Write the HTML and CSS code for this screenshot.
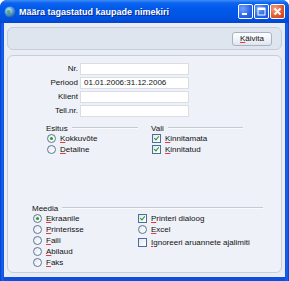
FILE: index.html
```html
<!DOCTYPE html>
<html>
<head>
	<title>Määra tagastatud kaupade nimekiri</title>
	<link rel="stylesheet" href="styles.css">
</head>
<body>
	<div class="window">
		<div class="titlebar">
			<svg class="app-icon" width="12" height="12" viewBox="0 0 12 12">
				<defs>
					<radialGradient id="globe" cx="0.4" cy="0.35" r="0.7">
						<stop offset="0" stop-color="#d8f0ff"/>
						<stop offset="0.45" stop-color="#5fa8e0"/>
						<stop offset="1" stop-color="#1d4f9a"/>
					</radialGradient>
				</defs>
				<circle cx="6" cy="6" r="5.5" fill="url(#globe)"/>
				<path d="M3 4.5 Q5 3 6.5 4.8 Q5.5 6.5 7.5 8 Q5 9 3.5 7.5 Z" fill="#4b9a63" opacity="0.8"/>
			</svg>
			<span class="title">Määra tagastatud kaupade nimekiri</span>
			<div class="caption-buttons">
				<span class="cap">
					<svg width="13" height="13" viewBox="0 0 13 13"><rect x="3" y="8" width="5" height="2" fill="#fff"/></svg>
				</span>
				<span class="cap">
					<svg width="13" height="13" viewBox="0 0 13 13"><rect x="3" y="3" width="7" height="7" fill="none" stroke="#fff" stroke-width="1"/><rect x="3" y="3" width="7" height="2" fill="#fff"/></svg>
				</span>
				<span class="cap close">
					<svg width="13" height="13" viewBox="0 0 13 13"><path d="M3.5 3.5 L9.5 9.5 M9.5 3.5 L3.5 9.5" stroke="#fff" stroke-width="1.8"/></svg>
				</span>
			</div>
		</div>

		<div class="client">
			<div class="toolbar">
				<button class="run"><u>K</u>äivita</button>
			</div>

			<div class="panel">
				<div class="fields">
					<label>Nr.</label><div class="input"></div>
					<label>Periood</label><div class="input">01.01.2006:31.12.2006</div>
					<label>Klient</label><div class="input"></div>
					<label>Tell.nr.</label><div class="input"></div>
				</div>

				<div class="groups">
					<div class="group">
						<div class="group-head"><span>Esitus</span><i></i></div>
						<div class="opt"><span class="radio on"></span><span><u>K</u>okkuvõte</span></div>
						<div class="opt"><span class="radio"></span><span><u>D</u>etailne</span></div>
					</div>
					<div class="group">
						<div class="group-head"><span>Vali</span><i></i></div>
						<div class="opt"><span class="check on"></span><span><u>K</u>innitamata</span></div>
						<div class="opt"><span class="check on"></span><span><u>K</u>innitatud</span></div>
					</div>
				</div>

				<div class="media">
					<div class="group-head"><span>Meedia</span><i></i></div>
					<div class="media-cols">
						<div class="col-left">
							<div class="opt"><span class="radio on"></span><span><u>E</u>kraanile</span></div>
							<div class="opt"><span class="radio"></span><span><u>P</u>rinterisse</span></div>
							<div class="opt"><span class="radio"></span><span><u>F</u>aili</span></div>
							<div class="opt"><span class="radio"></span><span><u>A</u>bilaud</span></div>
							<div class="opt"><span class="radio"></span><span><u>F</u>aks</span></div>
						</div>
						<div class="col-right">
							<div class="opt"><span class="check on"></span><span><u>P</u>rinteri dialoog</span></div>
							<div class="opt"><span class="radio"></span><span><u>E</u>xcel</span></div>
							<div class="opt lower"><span class="check"></span><span><u>I</u>gnoreeri aruannete ajalimiti</span></div>
						</div>
					</div>
				</div>
			</div>
		</div>
	</div>
</body>
</html>
```

FILE: styles.css
```css
body {
	margin: 0;
	font-family: "Liberation Sans", Arial, sans-serif;
	font-size: 8px;
	color: #111;
	background: #fff;
}

u {
	text-decoration: underline;
	text-decoration-color: #e8393a;
	text-underline-offset: 1px;
}

.window {
	width: 289px;
	height: 281px;
	box-sizing: border-box;
	display: flex;
	flex-direction: column;
	background: linear-gradient(90deg, #0838c8 0, #1764f0 2px, #0a4fe0 4px, #0a4fe0 285px, #1764f0 287px, #0838c8 289px);
	border-radius: 7px 7px 0 0;
	overflow: hidden;
}

.titlebar {
	height: 23px;
	flex: none;
	display: flex;
	align-items: center;
	padding: 0 4px 0 4px;
	background: linear-gradient(#3d90f8 0, #0d63ee 3px, #0058ea 9px, #0054e4 17px, #0046d2 23px);
}

.app-icon {
	flex: none;
	margin-right: 3px;
}

.title {
	flex: 1;
	color: #fff;
	font-weight: bold;
	font-size: 9px;
	text-shadow: 1px 1px 0 #0a2a8a;
	white-space: nowrap;
}

.caption-buttons {
	display: flex;
	gap: 1px;
}

.cap {
	width: 13px;
	height: 13px;
	border: 1px solid #fff;
	border-radius: 2px;
	background: radial-gradient(circle at 30% 30%, #6ea3ff, #2a63e8 60%, #1b4fd0);
	display: flex;
}

.cap.close {
	background: radial-gradient(circle at 30% 30%, #f6a286, #e2562a 60%, #c43e1c);
}

.client {
	flex: 1;
	margin: 0 4px 4px 4px;
	padding: 4px 3px 4px 3px;
	background: #e9ecf3;
	display: flex;
	flex-direction: column;
	gap: 5px;
}

.toolbar {
	height: 21px;
	flex: none;
	border: 1px solid #c3cce0;
	border-radius: 6px;
	background: #dfe5ef;
	display: flex;
	align-items: center;
	justify-content: flex-end;
	padding-right: 9px;
}

.run {
	width: 40px;
	height: 14px;
	padding: 0;
	font-family: "Liberation Sans", Arial, sans-serif;
	font-size: 8px;
	color: #111;
	border: 1px solid #a7b2c8;
	border-radius: 3px;
	background: linear-gradient(#ffffff, #eef1f6 60%, #dfe4ec);
}

.panel {
	flex: 1;
	border: 1px solid #c6cede;
	border-radius: 6px;
	background: #eef1f7;
	padding-top: 7px;
}

.fields {
	display: grid;
	grid-template-columns: 70px 109px;
	column-gap: 2px;
	row-gap: 2px;
}

.fields label {
	text-align: right;
	line-height: 12px;
}

.input {
	height: 12px;
	box-sizing: border-box;
	border: 1px solid #d9dde6;
	background: #fff;
	padding-left: 3px;
	line-height: 10px;
}

.groups {
	display: flex;
	gap: 13px;
	margin-top: 6px;
	padding-left: 38px;
}

.group {
	width: 92px;
}

.group-head {
	height: 10px;
	display: flex;
	align-items: center;
	gap: 4px;
}

.group-head i {
	flex: 1;
	height: 0;
	border-top: 1px solid #c5cad5;
	border-bottom: 1px solid #fafbfd;
}

.opt {
	height: 11px;
	display: flex;
	align-items: center;
	gap: 4px;
	padding-left: 1px;
	white-space: nowrap;
}

.radio {
	width: 9px;
	height: 9px;
	box-sizing: border-box;
	border: 1px solid #5f7596;
	border-radius: 50%;
	background: linear-gradient(135deg, #e4e8ee, #fff);
	flex: none;
	display: flex;
	align-items: center;
	justify-content: center;
}

.radio.on::after {
	content: "";
	width: 3px;
	height: 3px;
	border-radius: 50%;
	background: #1fa21f;
}

.check {
	width: 9px;
	height: 9px;
	box-sizing: border-box;
	border: 1px solid #4d6d9c;
	background: linear-gradient(135deg, #e2e6ec, #fff);
	flex: none;
	position: relative;
}

.check.on::after {
	content: "";
	position: absolute;
	left: 2px;
	top: 0;
	width: 2px;
	height: 4px;
	border: solid #1f9e24;
	border-width: 0 1.5px 1.5px 0;
	transform: rotate(40deg);
}

.media {
	margin-top: 48px;
	padding-left: 24px;
	width: 231px;
}

.media-cols {
	display: flex;
}

.col-left {
	width: 105px;
}

.col-right .lower {
	margin-top: 2px;
}
```
